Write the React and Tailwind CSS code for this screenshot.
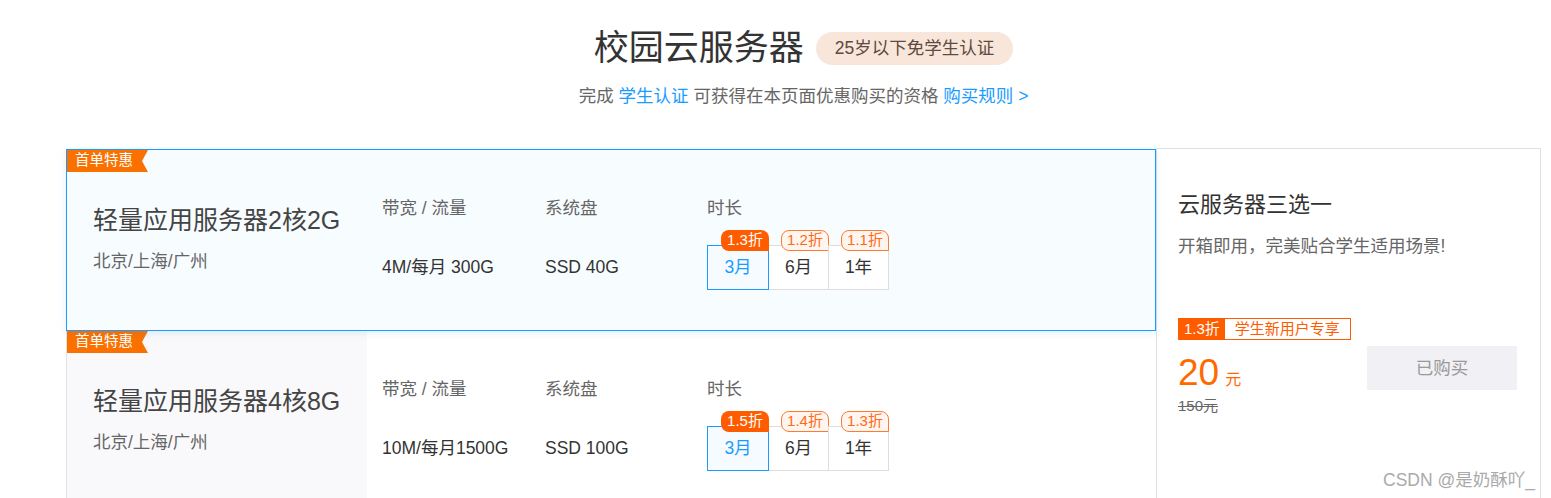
const font = "font-['Liberation_Sans','Noto_Sans_CJK_SC',sans-serif]";

const rows = [
  {
    name: "轻量应用服务器2核2G",
    bandwidth: "4M/每月 300G",
    disk: "SSD 40G",
    tags: ["1.3折", "1.2折", "1.1折"],
    active: true,
  },
  {
    name: "轻量应用服务器4核8G",
    bandwidth: "10M/每月1500G",
    disk: "SSD 100G",
    tags: ["1.5折", "1.4折", "1.3折"],
    active: false,
  },
];

const durations = ["3月", "6月", "1年"];

function Row({ row }) {
  return (
    <div
      className={
        row.active
          ? "relative z-10 flex h-[182px] border border-[#1a9bff] bg-[#f7fcff] shadow-[0_2px_8px_rgba(0,120,220,0.12)]"
          : "relative flex h-[181px] border-l border-[#e3e3e3] bg-white"
      }
    >
      {/* badge */}
      <div className="absolute left-0 top-0 flex h-[22px] w-[81px] items-center bg-[#fb7100] pl-[8px] text-[14.5px] text-white [clip-path:polygon(0_0,100%_0,calc(100%-6px)_50%,100%_100%,0_100%)]">
        首单特惠
      </div>

      <div
        className={
          row.active
            ? "w-[300px] pl-[26px] pt-[55px]"
            : "w-[300px] bg-[#f9f9fb] pl-[26px] pt-[55px]"
        }
      >
        <div className="text-[25px] leading-[30px] text-[#444]">{row.name}</div>
        <div className="mt-[14px] text-[17.5px] leading-[24px] text-[#666]">
          北京/上海/广州
        </div>
      </div>

      <div className="ml-[15px] w-[163px] pt-[46px]">
        <div className="text-[17.5px] leading-[24px] text-[#666]">带宽 / 流量</div>
        <div className="mt-[25px] flex h-[44px] items-center text-[17.5px] text-[#333]">
          {row.bandwidth}
        </div>
      </div>

      <div className="w-[162px] pt-[46px]">
        <div className="text-[17.5px] leading-[24px] text-[#666]">系统盘</div>
        <div className="mt-[25px] flex h-[44px] items-center text-[17.5px] text-[#333]">
          {row.disk}
        </div>
      </div>

      <div className="pt-[46px]">
        <div className="text-[17.5px] leading-[24px] text-[#666]">时长</div>
        <div className="mt-[25px] flex">
          {durations.map((d, i) => (
            <div
              key={d}
              className={
                i === 0
                  ? "relative z-10 flex h-[45px] w-[62px] items-center justify-center border border-[#1a9bff] bg-[#f5fbff] text-[17.5px] text-[#1a9bff]"
                  : "relative -ml-px flex h-[45px] w-[61px] items-center justify-center border border-[#dddddd] bg-white text-[17.5px] text-[#333]"
              }
            >
              <div
                className={
                  i === 0
                    ? "absolute -right-px -top-[16px] flex h-[21px] w-[48px] items-center justify-center rounded-tl-[8px] rounded-tr-[8px] rounded-bl-[8px] bg-[#ff5c00] text-[15px] text-white"
                    : "absolute -right-px -top-[16px] flex h-[21px] w-[48px] items-center justify-center rounded-tl-[8px] rounded-tr-[8px] rounded-bl-[8px] border border-[#ff7a33] bg-[#fff5ef] text-[15px] text-[#ff6a1a]"
                }
              >
                {row.tags[i]}
              </div>
              {d}
            </div>
          ))}
        </div>
      </div>
    </div>
  );
}

export default function App() {
  return (
    <div className={`relative h-[498px] w-[1551px] overflow-hidden bg-white ${font}`}>
      <div className="ml-[66px] w-[1475px]">
        {/* header */}
        <div className="flex items-center justify-center pt-[24px]">
          <h1 className="text-[35px] leading-[48px] text-[#333]">校园云服务器</h1>
          <span className="ml-[12px] flex h-[33px] items-center rounded-full bg-[#f8e6da] px-[19px] text-[17.5px] text-[#5e4a3e]">
            25岁以下免学生认证
          </span>
        </div>
        <p className="mt-[12px] text-center text-[17.5px] leading-[24px] text-[#666]">
          完成 <span className="text-[#1a9bff]">学生认证</span> 可获得在本页面优惠购买的资格{" "}
          <span className="text-[#1a9bff]">购买规则 &gt;</span>
        </p>

        {/* list */}
        <div className="mt-[40px] flex">
          <div className="w-[1090px] pt-px">
            {rows.map((r) => (
              <Row key={r.name} row={r} />
            ))}
          </div>

          <div className="h-[364px] w-[385px] border border-[#e0e0e0] bg-white pl-[21px] pr-[23px] pt-[42px]">
            <div className="text-[22px] leading-[28px] text-[#333]">云服务器三选一</div>
            <div className="mt-[15px] text-[17.5px] leading-[24px] text-[#666]">
              开箱即用，完美贴合学生适用场景!
            </div>

            <div className="mt-[60px] flex h-[22px] w-fit border border-[#ff5c00] text-[15px]">
              <span className="flex items-center bg-[#ff5c00] px-[5px] text-white">1.3折</span>
              <span className="flex items-center px-[10px] text-[#ff5c00]">学生新用户专享</span>
            </div>

            <div className="flex items-start justify-between">
              <div className="pt-[13px]">
                <div className="flex items-baseline leading-[40px] text-[#ff6a00]">
                  <span className="text-[37px]">20</span>
                  <span className="ml-[6px] text-[16px]">元</span>
                </div>
                <div className="-mt-[4px] text-[15px] leading-[20px] text-[#666] line-through">
                  150元
                </div>
              </div>
              <button className="mt-[6px] flex h-[44px] w-[150px] items-center justify-center bg-[#f0f0f5] text-[17.5px] text-[#999]">
                已购买
              </button>
            </div>
          </div>
        </div>
      </div>

      <div className="absolute right-[16px] top-[467px] text-[17.5px] text-[#aaa]">
        CSDN @是奶酥吖_
      </div>
    </div>
  );
}
